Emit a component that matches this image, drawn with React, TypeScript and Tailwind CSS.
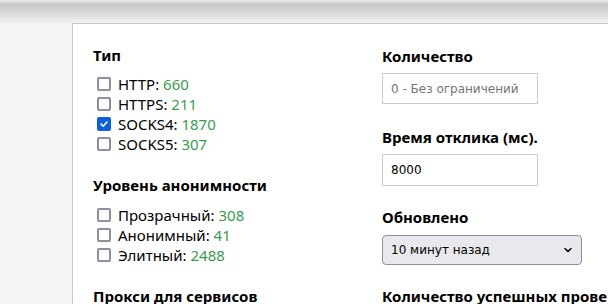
import { ChevronDown } from "lucide-react";

const types = [
  { label: "HTTP", count: 660, checked: false },
  { label: "HTTPS", count: 211, checked: false },
  { label: "SOCKS4", count: 1870, checked: true },
  { label: "SOCKS5", count: 307, checked: false },
];

const levels = [
  { label: "Прозрачный", count: 308, checked: false },
  { label: "Анонимный", count: 41, checked: false },
  { label: "Элитный", count: 2488, checked: false },
];

function Check({ checked }: { checked: boolean }) {
  return checked ? (
    <span className="ml-[4px] mr-[7px] flex h-[14px] w-[14px] shrink-0 items-center justify-center rounded-[2px] bg-[#0c5fd9]">
      <svg viewBox="0 0 12 12" className="h-[10px] w-[10px]">
        <path d="M2.5 6.2 L5 8.6 L9.6 3.6" fill="none" stroke="white" strokeWidth="1.9" strokeLinecap="round" strokeLinejoin="round" />
      </svg>
    </span>
  ) : (
    <span className="ml-[4px] mr-[7px] h-[14px] w-[14px] shrink-0 rounded-[2px] border-2 border-[#8f8f9d] bg-white" />
  );
}

function Option({ label, count, checked }: { label: string; count: number; checked: boolean }) {
  return (
    <label className="flex h-5 items-center text-[15px] leading-5 text-black">
      <Check checked={checked} />
      <span>
        {label}: <span className="text-[#3a9b4c]">{count}</span>
      </span>
    </label>
  );
}

function Heading({ children }: { children: React.ReactNode }) {
  return (
    <h3
      className="whitespace-nowrap text-[15px] font-bold leading-5 text-black"
      style={{ fontFamily: '"Noto Sans", "Open Sans", sans-serif' }}
    >
      {children}
    </h3>
  );
}

export default function App() {
  return (
    <div
      className="h-[304px] w-[608px] overflow-hidden bg-[#f4f4f3]"
      style={{ fontFamily: '"Noto Sans", "Open Sans", sans-serif' }}
    >
      {/* top shadow strip */}
      <div className="h-[23px] bg-gradient-to-b from-[#ececec] via-[#c6c6c6] via-[18%] to-[#f1f1f1]" />

      <div className="ml-[72px] h-full border-l border-t border-[#c9c9c9] bg-white pl-5 pt-[21px]">
        <div className="flex gap-5">
          {/* Left column */}
          <div className="w-[269px] shrink-0">
            <Heading>Тип</Heading>
            <div className="mt-[9px]">
              {types.map((t) => (
                <Option key={t.label} {...t} />
              ))}
            </div>

            <div className="mt-[21px]">
              <Heading>Уровень анонимности</Heading>
            </div>
            <div className="mt-[10px]">
              {levels.map((t) => (
                <Option key={t.label} {...t} />
              ))}
            </div>

            <div className="mt-[21px]">
              <Heading>Прокси для сервисов</Heading>
            </div>
          </div>

          {/* Right column */}
          <div className="w-[260px] shrink-0 pt-px" style={{ fontFamily: '"DejaVu Sans", sans-serif' }}>
            <Heading>Количество</Heading>
            <input
              type="text"
              placeholder="0 - Без ограничений"
              className="mt-[7px] block h-[31px] w-[156px] border border-[#cbcbcb] px-[8px] text-[12px] text-black outline-none placeholder:text-[#757575]"
            />

            <div className="mt-[23px]">
              <Heading>Время отклика (мс).</Heading>
            </div>
            <input
              type="text"
              defaultValue="8000"
              className="mt-[7px] block h-[32px] w-[156px] border border-[#cbcbcb] px-[8px] text-[12px] text-black outline-none"
            />

            <div className="mt-[21px]">
              <Heading>Обновлено</Heading>
            </div>
            <div className="mt-[8px] flex h-[30px] w-[200px] items-center justify-between rounded-[4px] border border-[#8f8f9d] bg-[#e9e9ed] pl-2 pr-[7px] text-[12px] text-black">
              <span>10 минут назад</span>
              <ChevronDown className="h-3 w-3" strokeWidth={3} />
            </div>

            <div className="mt-[21px]">
              <Heading>Количество успешных проверок</Heading>
            </div>
          </div>
        </div>
      </div>
    </div>
  );
}
